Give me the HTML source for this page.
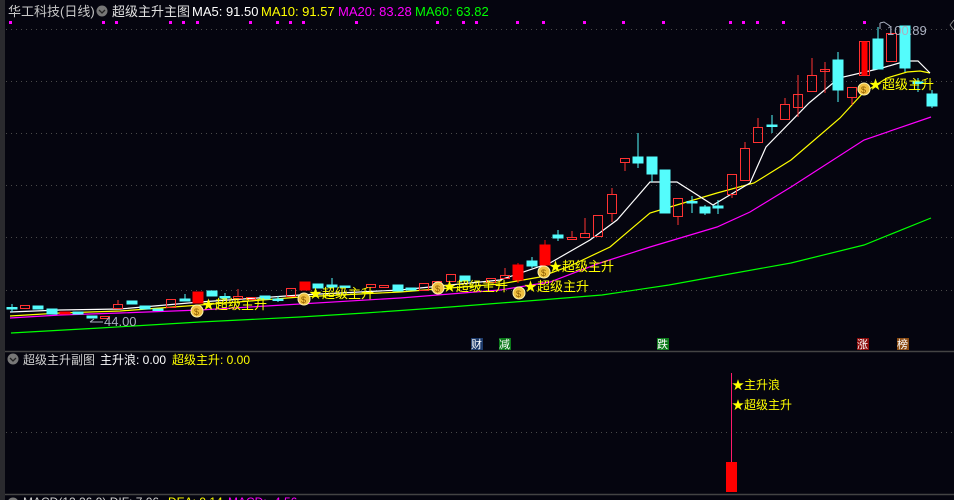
<!DOCTYPE html>
<html><head><meta charset="utf-8"><style>
html,body{margin:0;padding:0;background:#05050f;width:954px;height:500px;overflow:hidden}
svg{display:block}
text{font-family:"Liberation Sans","Noto Sans CJK SC",sans-serif}
</style></head><body>
<svg width="954" height="500" viewBox="0 0 954 500" xmlns="http://www.w3.org/2000/svg">
<rect width="954" height="500" fill="#05050f"/>
<rect x="0" y="0" width="5" height="500" fill="#2a2a2e"/>
<g stroke="#4a4a4a" stroke-width="1" stroke-dasharray="1,4">
<line x1="6" y1="29.5" x2="954" y2="29.5"/><line x1="6" y1="81.5" x2="954" y2="81.5"/>
<line x1="6" y1="133.5" x2="954" y2="133.5"/><line x1="6" y1="185.5" x2="954" y2="185.5"/>
<line x1="6" y1="237.5" x2="954" y2="237.5"/><line x1="6" y1="290.5" x2="954" y2="290.5"/>
<line x1="6" y1="432.5" x2="954" y2="432.5"/>
</g>
<line x1="5" y1="351.5" x2="954" y2="351.5" stroke="#444" stroke-width="1.5"/>
<line x1="5" y1="494.5" x2="954" y2="494.5" stroke="#444" stroke-width="1.5"/>

<!-- header -->
<text x="8" y="16" font-size="13" fill="#c8c8c8">华工科技(日线)</text>
<circle cx="102" cy="11" r="5.5" fill="#777"/><path d="M99,10 l3,3 l3,-3" stroke="#222" stroke-width="1.3" fill="none"/>
<text x="112" y="16" font-size="13" fill="#e0e0e0">超级主升主图</text>
<text x="192" y="16" font-size="13" fill="#ffffff">MA5: 91.50</text>
<text x="261" y="16" font-size="13" fill="#ffff00">MA10: 91.57</text>
<text x="338" y="16" font-size="13" fill="#ff00ff">MA20: 83.28</text>
<text x="415" y="16" font-size="13" fill="#00ff00">MA60: 63.82</text>
<path d="M950,25 l4,-5 M950,25 l4,5" stroke="#888" fill="none"/>
<g fill="#ff00ff">
<rect x="9" y="21" width="3" height="3"/><rect x="102" y="21" width="3" height="3"/><rect x="115" y="21" width="3" height="3"/><rect x="169" y="21" width="3" height="3"/><rect x="182" y="21" width="3" height="3"/><rect x="196" y="21" width="3" height="3"/><rect x="249" y="21" width="3" height="3"/><rect x="276" y="21" width="3" height="3"/><rect x="289" y="21" width="3" height="3"/><rect x="302" y="21" width="3" height="3"/><rect x="355" y="21" width="3" height="3"/><rect x="436" y="21" width="3" height="3"/><rect x="462" y="21" width="3" height="3"/><rect x="475" y="21" width="3" height="3"/><rect x="516" y="21" width="3" height="3"/><rect x="542" y="21" width="3" height="3"/><rect x="583" y="21" width="3" height="3"/><rect x="622" y="21" width="3" height="3"/><rect x="662" y="21" width="3" height="3"/><rect x="729" y="21" width="3" height="3"/><rect x="742" y="21" width="3" height="3"/><rect x="756" y="21" width="3" height="3"/><rect x="782" y="21" width="3" height="3"/><rect x="863" y="21" width="3" height="3"/>
</g>

<!-- MA lines -->
<polyline fill="none" stroke="#00ff00" stroke-width="1.2" points="11,333 100,328 200,322 300,317 365,313 450,307 540,300 602,295 669,285 724,275 791,263 864,245 931,218"/>
<polyline fill="none" stroke="#ff00ff" stroke-width="1.2" points="10,318 60,315 120,313 200,310 300,304 400,298 500,290 550,282 600,263 650,247 717,227 750,212 791,187 864,140 931,117"/>
<polyline fill="none" stroke="#ffff00" stroke-width="1.2" points="10,316 60,313 120,311 200,305 300,297 400,292 500,284 540,277 570,266 610,247 650,213 670,207 717,193 754,183 791,160 840,118 863,93 887,78 907,72 920,71 930,73"/>
<polyline fill="none" stroke="#ffffff" stroke-width="1.2" points="10,312 60,310 120,309 200,302 300,295 400,290 500,280 550,263 590,240 617,220 650,182 677,182 713,205 750,183 766,147 809,103 839,78 882,68 906,61 918,61 930,73"/>

<!-- candles -->
<g stroke-width="1">
<g fill="#54fcfc" stroke="#54fcfc">
<line x1="12" y1="304" x2="12" y2="312"/><rect x="7" y="307.5" width="10" height="1.5"/>
<rect x="33" y="306" width="10" height="3"/>
<rect x="47" y="309" width="10" height="5"/>
<rect x="73" y="312" width="10" height="2"/>
<rect x="87" y="316" width="10" height="2"/>
<rect x="127" y="301" width="10" height="3"/>
<rect x="140" y="306" width="10" height="3"/>
<rect x="153" y="309" width="10" height="1.5"/>
<line x1="185" y1="294" x2="185" y2="301"/><rect x="180" y="299" width="10" height="2"/>
<rect x="207" y="291" width="10" height="5"/>
<line x1="225" y1="293" x2="225" y2="300"/><rect x="220" y="296.5" width="10" height="1.5"/>
<rect x="260" y="296" width="10" height="3"/>
<line x1="278" y1="296" x2="278" y2="302"/><rect x="273" y="299" width="10" height="1.5"/>
<rect x="313" y="284" width="10" height="4"/>
<line x1="332" y1="278" x2="332" y2="288"/><rect x="327" y="285" width="10" height="2"/>
<rect x="340" y="286" width="10" height="1.5"/>
<rect x="393" y="285" width="10" height="6"/>
<rect x="406" y="288" width="10" height="2"/>
<rect x="460" y="276" width="10" height="5"/>
<line x1="532" y1="257" x2="532" y2="268"/><rect x="527" y="261" width="10" height="5"/>
<line x1="558" y1="230" x2="558" y2="241"/><rect x="553" y="235" width="10" height="3"/>
<line x1="638" y1="133" x2="638" y2="168"/><rect x="633" y="157" width="10" height="6"/>
<line x1="652" y1="157" x2="652" y2="182"/><rect x="647" y="157" width="10" height="17"/>
<rect x="660" y="170" width="10" height="43"/>
<line x1="692" y1="196" x2="692" y2="213"/><rect x="687" y="201.5" width="10" height="1.5"/>
<line x1="705" y1="205" x2="705" y2="215"/><rect x="700" y="207" width="10" height="6"/>
<line x1="718" y1="200" x2="718" y2="214"/><rect x="713" y="206" width="10" height="2"/>
<line x1="772" y1="115" x2="772" y2="133"/><rect x="767" y="125" width="10" height="1.5"/>
<line x1="838" y1="52" x2="838" y2="102"/><rect x="833" y="60" width="10" height="30"/>
<line x1="878" y1="27" x2="878" y2="69"/><rect x="873" y="39" width="10" height="30"/>
<line x1="905" y1="26" x2="905" y2="72"/><rect x="900" y="26" width="10" height="42"/>
<line x1="918" y1="78" x2="918" y2="92"/><rect x="913" y="82" width="10" height="1.5"/>
<line x1="932" y1="90" x2="932" y2="108"/><rect x="927" y="94" width="10" height="12"/>
</g>
<g fill="none" stroke="#ff3232">
<rect x="20.5" y="305.5" width="9" height="3"/>
<rect x="100.5" y="316.5" width="9" height="2"/>
<line x1="118" y1="300" x2="118" y2="304"/><rect x="113.5" y="304.5" width="9" height="4"/>
<rect x="166.5" y="299.5" width="9" height="8"/>
<line x1="238" y1="289" x2="238" y2="296"/><rect x="233.5" y="296.5" width="9" height="2"/>
<rect x="246.5" y="297.5" width="9" height="2"/>
<rect x="286.5" y="288.5" width="9" height="8"/>
<rect x="366.5" y="284.5" width="9" height="3"/>
<rect x="379.5" y="285.5" width="9" height="2"/>
<rect x="419.5" y="283.5" width="9" height="7"/>
<rect x="432.5" y="281.5" width="9" height="5"/>
<rect x="446.5" y="274.5" width="9" height="7"/>
<rect x="486.5" y="278.5" width="9" height="4"/>
<line x1="505" y1="268" x2="505" y2="275"/><rect x="500.5" y="275.5" width="9" height="3"/>
<line x1="572" y1="231" x2="572" y2="237"/><rect x="567.5" y="237.5" width="9" height="2"/>
<line x1="585" y1="218" x2="585" y2="233"/><rect x="580.5" y="233.5" width="9" height="4"/>
<rect x="593.5" y="215.5" width="9" height="21"/>
<line x1="612" y1="188" x2="612" y2="194"/><line x1="612" y1="213" x2="612" y2="222"/><rect x="607.5" y="194.5" width="9" height="19"/>
<line x1="625" y1="162" x2="625" y2="171"/><rect x="620.5" y="158.5" width="9" height="4"/>
<line x1="678" y1="216" x2="678" y2="225"/><rect x="673.5" y="198.5" width="9" height="18"/>
<line x1="732" y1="194" x2="732" y2="198"/><rect x="727.5" y="174.5" width="9" height="20"/>
<line x1="745" y1="142" x2="745" y2="148"/><rect x="740.5" y="148.5" width="9" height="32"/>
<line x1="758" y1="118" x2="758" y2="127"/><rect x="753.5" y="127.5" width="9" height="15"/>
<line x1="785" y1="98" x2="785" y2="104"/><rect x="780.5" y="104.5" width="9" height="15"/>
<line x1="798" y1="75" x2="798" y2="117"/><rect x="793.5" y="94.5" width="9" height="13"/>
<line x1="812" y1="58" x2="812" y2="75"/><rect x="807.5" y="75.5" width="9" height="16"/>
<line x1="825" y1="62" x2="825" y2="93"/><rect x="820.5" y="69.5" width="9" height="2"/>
<line x1="852" y1="97" x2="852" y2="105"/><rect x="847.5" y="87.5" width="9" height="10"/>
<rect x="859.5" y="41.5" width="10" height="34"/>
<rect x="886.5" y="33.5" width="10" height="28"/>
</g>
<g fill="#ff0000" stroke="#ff0000">
<rect x="60" y="312" width="10" height="2"/>
<rect x="193" y="292" width="10" height="11"/>
<rect x="300" y="282" width="10" height="8"/>
<line x1="518" y1="263" x2="518" y2="283"/><rect x="513" y="265" width="10" height="15"/>
<line x1="545" y1="240" x2="545" y2="268"/><rect x="540" y="245" width="10" height="20"/>
<rect x="862" y="42" width="5" height="33"/>
</g>
</g>

<g font-size="13" fill="#ffff00">
<g transform="translate(197,311)"><circle r="6" fill="#f0c040" stroke="#fff6b0"/><text x="-3" y="4" font-size="9" fill="#8a5a00">$</text></g>
<text x="202" y="309">★超级主升</text>
<g transform="translate(304,299)"><circle r="6" fill="#f0c040" stroke="#fff6b0"/><text x="-3" y="4" font-size="9" fill="#8a5a00">$</text></g>
<text x="309" y="298">★超级主升</text>
<g transform="translate(438,288)"><circle r="6" fill="#f0c040" stroke="#fff6b0"/><text x="-3" y="4" font-size="9" fill="#8a5a00">$</text></g>
<text x="443" y="291">★超级主升</text>
<g transform="translate(519,293)"><circle r="6" fill="#f0c040" stroke="#fff6b0"/><text x="-3" y="4" font-size="9" fill="#8a5a00">$</text></g>
<text x="524" y="291">★超级主升</text>
<g transform="translate(544,272)"><circle r="6" fill="#f0c040" stroke="#fff6b0"/><text x="-3" y="4" font-size="9" fill="#8a5a00">$</text></g>
<text x="549" y="271">★超级主升</text>
<g transform="translate(864,89)"><circle r="6" fill="#f0c040" stroke="#fff6b0"/><text x="-3" y="4" font-size="9" fill="#8a5a00">$</text></g>
<text x="869" y="89">★超级主升</text>
</g>
<text x="104" y="326" font-size="13" fill="#aab0c0">44.00</text>
<path d="M90,322 h13 M90,322 l4,-3" stroke="#aab0c0" fill="none"/>
<text x="887" y="35" font-size="13" fill="#aab0c0">100.89</text>
<path d="M880,23 v6 M880,23 l4,-1 l6,4" stroke="#aab0c0" fill="none"/>

<g font-size="11">
<rect x="471" y="338" width="12" height="12" fill="#1c3a6a"/><text x="471" y="348" fill="#fff">财</text>
<rect x="499" y="338" width="12" height="12" fill="#0b7a1a"/><text x="499" y="348" fill="#fff">减</text>
<rect x="657" y="338" width="12" height="12" fill="#0b7a1a"/><text x="657" y="348" fill="#fff">跌</text>
<rect x="857" y="338" width="12" height="12" fill="#8a0a0a"/><text x="857" y="348" fill="#fff">涨</text>
<rect x="897" y="338" width="12" height="12" fill="#8a4a10"/><text x="897" y="348" fill="#fff">榜</text>
</g>

<circle cx="13" cy="359" r="5.5" fill="#777"/><path d="M10,358 l3,3 l3,-3" stroke="#222" stroke-width="1.3" fill="none"/>
<text x="23" y="364" font-size="12" fill="#d0d0d0">超级主升副图</text>
<text x="100" y="364" font-size="12" fill="#ffffff">主升浪: 0.00</text>
<text x="172" y="364" font-size="12" fill="#ffff00">超级主升: 0.00</text>
<line x1="731.5" y1="373" x2="731.5" y2="462" stroke="#ff1a6a" stroke-width="1"/>
<rect x="726" y="462" width="11" height="30" fill="#ff0000"/>
<text x="732" y="389" font-size="12" fill="#ffff00">★主升浪</text>
<text x="732" y="409" font-size="12" fill="#ffff00">★超级主升</text>

<circle cx="13" cy="503" r="5.5" fill="#777"/>
<text x="23" y="506" font-size="12" fill="#d0d0d0">MACD(12,26,9) DIF: 7.06</text>
<text x="168" y="506" font-size="12" fill="#ffff00">DEA: 9.14</text>
<text x="228" y="506" font-size="12" fill="#ff00ff">MACD: -4.56</text>
</svg>
</body></html>
